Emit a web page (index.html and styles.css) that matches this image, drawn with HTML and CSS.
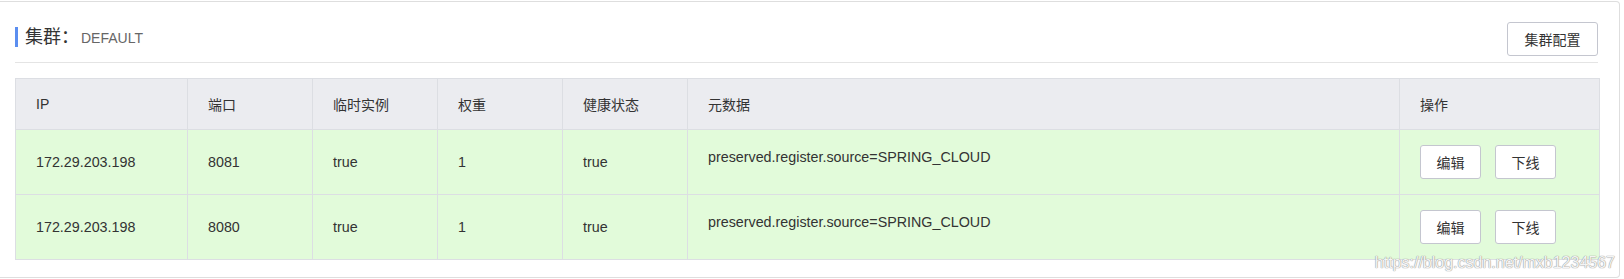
FILE: index.html
```html
<!DOCTYPE html>
<html lang="zh-CN">
<head>
<meta charset="utf-8">
<title>集群</title>
<link rel="stylesheet" href="styles.css">
</head>
<body>
<div class="card">
  <div class="card-head">
    <div class="title"><span class="title-main">集群：</span><span class="title-sub">DEFAULT</span></div>
    <button class="btn btn-config">集群配置</button>
  </div>
  <table class="grid">
    <colgroup>
      <col class="c-ip"><col class="c-n"><col class="c-n"><col class="c-n"><col class="c-n"><col class="c-meta"><col class="c-op">
    </colgroup>
    <thead>
      <tr><th>IP</th><th>端口</th><th>临时实例</th><th>权重</th><th>健康状态</th><th>元数据</th><th>操作</th></tr>
    </thead>
    <tbody>
      <tr>
        <td>172.29.203.198</td><td>8081</td><td>true</td><td>1</td><td>true</td>
        <td class="meta">preserved.register.source=SPRING_CLOUD</td>
        <td class="ops"><button class="btn">编辑</button><button class="btn">下线</button></td>
      </tr>
      <tr>
        <td>172.29.203.198</td><td>8080</td><td>true</td><td>1</td><td>true</td>
        <td class="meta">preserved.register.source=SPRING_CLOUD</td>
        <td class="ops"><button class="btn">编辑</button><button class="btn">下线</button></td>
      </tr>
    </tbody>
  </table>
  <div class="watermark">https://blog.csdn.net/mxb1234567</div>
</div>
</body>
</html>
```

FILE: styles.css
```css
html, body {
  margin: 0;
  padding: 0;
  background: #fff;
}
body {
  font-family: "Liberation Sans", "Noto Sans CJK SC", sans-serif;
  font-size: 14px;
  color: #333;
  width: 1624px;
  height: 279px;
  overflow: hidden;
}
.card {
  position: relative;
  margin-top: 1px;
  width: 1620px;
  box-sizing: border-box;
  height: 277px;
  border: 1px solid #dedede;
  border-left: none;
  border-radius: 0 4px 4px 0;
  padding: 20px 21px 0 15px;
}
.card-head {
  display: flex;
  align-items: center;
  justify-content: space-between;
  height: 34px;
  padding-bottom: 6px;
  border-bottom: 1px solid #e4e4e4;
}
.title {
  display: flex;
  align-items: center;
  height: 20px;
  margin-top: -4px;
  border-left: 3px solid #5b8ef0;
  padding-left: 7px;
}
.title-main {
  font-size: 18px;
  color: #333;
  line-height: 20px;
}
.title-sub {
  font-size: 14px;
  color: #666;
  line-height: 20px;
  margin-left: 2px;
  padding-top: 2px;
}
.btn {
  font-family: "Liberation Sans", "Noto Sans CJK SC", sans-serif;
  font-size: 14px;
  color: #333;
  background: #fff;
  border: 1px solid #c4c6cf;
  border-radius: 3px;
  height: 34px;
  box-sizing: border-box;
  padding: 0;
  cursor: pointer;
}
.btn-config {
  width: 91px;
}
.grid {
  margin-top: 15px;
  width: 1584px;
  border-collapse: collapse;
  table-layout: fixed;
  font-size: 14.3px;
}
.c-ip { width: 172px; }
.c-n { width: 125px; }
.c-meta { width: 712px; }
.c-op { width: 200px; }
.grid th, .grid td {
  border: 1px solid #dcdee3;
  text-align: left;
  padding: 0 0 0 20px;
  font-weight: normal;
  color: #333;
}
.grid th {
  background: #ebecf0;
  height: 50px;
  vertical-align: middle;
  font-size: 14px;
}
.grid td {
  background: #e2fbda;
  height: 64px;
  vertical-align: middle;
}
.grid td.meta {
  vertical-align: top;
  height: 47px;
  padding-top: 17px;
  line-height: 20px;
}
.grid td.ops .btn {
  width: 61px;
  margin-right: 14px;
}
.watermark {
  position: absolute;
  right: 4px;
  bottom: 6px;
  font-family: "Liberation Sans", sans-serif;
  font-size: 16px;
  color: #f4f4f4;
  text-shadow: 0 0 1px #8a8a8a, 0 0 1px #9a9a9a;
  line-height: 16px;
}
```
